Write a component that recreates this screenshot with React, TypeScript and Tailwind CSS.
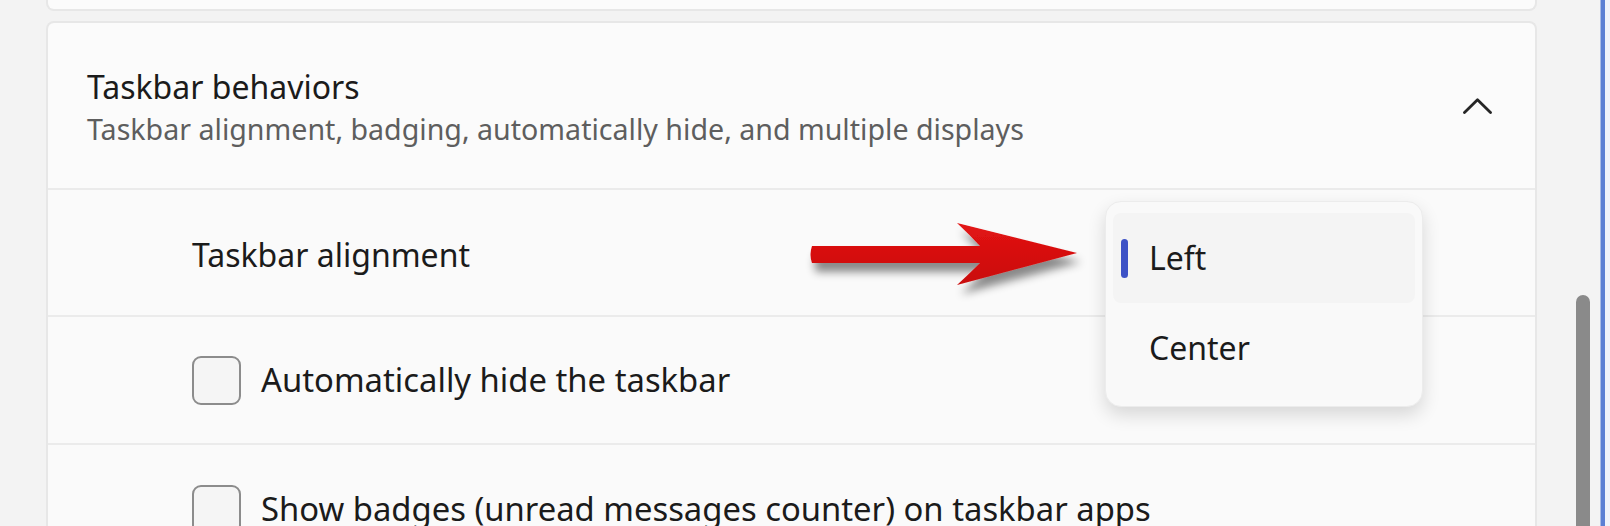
import React from "react";

function Checkbox() {
  return (
    <div className="w-[49px] h-[49px] shrink-0 rounded-[9px] border-2 border-[#8c8c8c] bg-[#f5f5f5]" />
  );
}

function Arrow() {
  return (
    <svg
      className="absolute left-[800px] top-[210px]"
      width="300"
      height="110"
      viewBox="0 0 300 110"
    >
      <defs>
        <linearGradient id="ag" x1="0" y1="0" x2="0" y2="1">
          <stop offset="0" stopColor="#e31414" />
          <stop offset="1" stopColor="#c90a0a" />
        </linearGradient>
        <filter id="sh" x="-10%" y="-30%" width="130%" height="180%">
          <feDropShadow dx="4" dy="9" stdDeviation="4" floodColor="#000" floodOpacity="0.45" />
        </filter>
      </defs>
      <path
        d="M12 36 L180 36 Q170 25 157 13 L277 43 L157 75 Q170 63 180 53 L12 53 Q9 44.5 12 36 Z"
        fill="url(#ag)"
        filter="url(#sh)"
      />
    </svg>
  );
}

export default function App() {
  return (
    <div className="relative w-[1610px] h-[526px] overflow-hidden bg-[#f3f3f3] flex font-['Noto_Sans',sans-serif] text-[#1b1b1b]">
      <div className="flex w-[1600px] shrink-0">
        <div className="w-[1537px] pl-[46px] flex flex-col shrink-0">
          <div className="h-[11px] shrink-0 border-x-2 border-b-2 border-[#e7e7e7] rounded-b-[8px] bg-[#fbfbfb]" />
          <div className="mt-[10px] shrink-0 border-x-2 border-t-2 border-[#e7e7e7] rounded-t-[8px] bg-[#fbfbfb] flex flex-col">
            <div className="h-[167px] shrink-0 flex items-center pl-[39px] pr-[43px] border-b-2 border-[#ebebeb]">
              <div className="flex flex-col flex-1 pt-[4px]">
                <div className="text-[32px] leading-[42px]">Taskbar behaviors</div>
                <div className="text-[28.6px] leading-[42px] text-[#5e5e5e]">
                  Taskbar alignment, badging, automatically hide, and multiple displays
                </div>
              </div>
              <svg width="29" height="16" viewBox="0 0 29 16" className="shrink-0">
                <path d="M1.5 14.5 L14.5 1.8 L27.5 14.5" fill="none" stroke="#262626" strokeWidth="2.8" strokeLinecap="round" strokeLinejoin="round" />
              </svg>
            </div>
            <div className="h-[127px] shrink-0 flex items-center pl-[144px] pt-[5px] border-b-2 border-[#ebebeb] bg-[#fafafa]">
              <span className="text-[32px]">Taskbar alignment</span>
            </div>
            <div className="h-[128px] shrink-0 flex items-center pl-[144px] gap-[20px] border-b-2 border-[#ebebeb] bg-[#fafafa]">
              <Checkbox />
              <span className="text-[32.8px]">Automatically hide the taskbar</span>
            </div>
            <div className="h-[128px] shrink-0 flex items-center pl-[144px] gap-[20px] bg-[#fafafa]">
              <Checkbox />
              <span className="text-[32.8px]">Show badges (unread messages counter) on taskbar apps</span>
            </div>
          </div>
        </div>
        <div className="w-[39px] shrink-0" />
        <div className="w-[14px] shrink-0 pt-[295px] flex flex-col">
          <div className="flex-1 rounded-t-full bg-[#8a8a8a]" />
        </div>
        <div className="w-[10px] shrink-0" />
      </div>
      <div className="w-[1px] shrink-0 bg-[#a8bbe6]" />
      <div className="w-[4px] shrink-0 bg-[#5b7fd3]" />
      <div className="w-[5px] shrink-0 bg-[#eef2fa]" />

      <Arrow />

      <div className="absolute left-[1105px] top-[201px] w-[318px] h-[206px] rounded-[16px] bg-[#f9f9f9] border border-[#ececec] shadow-[0_8px_18px_rgba(0,0,0,0.14)] px-[7px] py-[11px] flex flex-col">
        <div className="h-[90px] rounded-[8px] bg-[#f4f4f4] flex items-center relative">
          <div className="absolute left-[8px] top-[26px] w-[7px] h-[39px] rounded-full bg-[#3d52c6]" />
          <span className="pl-[36px] text-[32px]">Left</span>
        </div>
        <div className="h-[90px] rounded-[8px] flex items-center">
          <span className="pl-[36px] text-[32px]">Center</span>
        </div>
      </div>
    </div>
  );
}
